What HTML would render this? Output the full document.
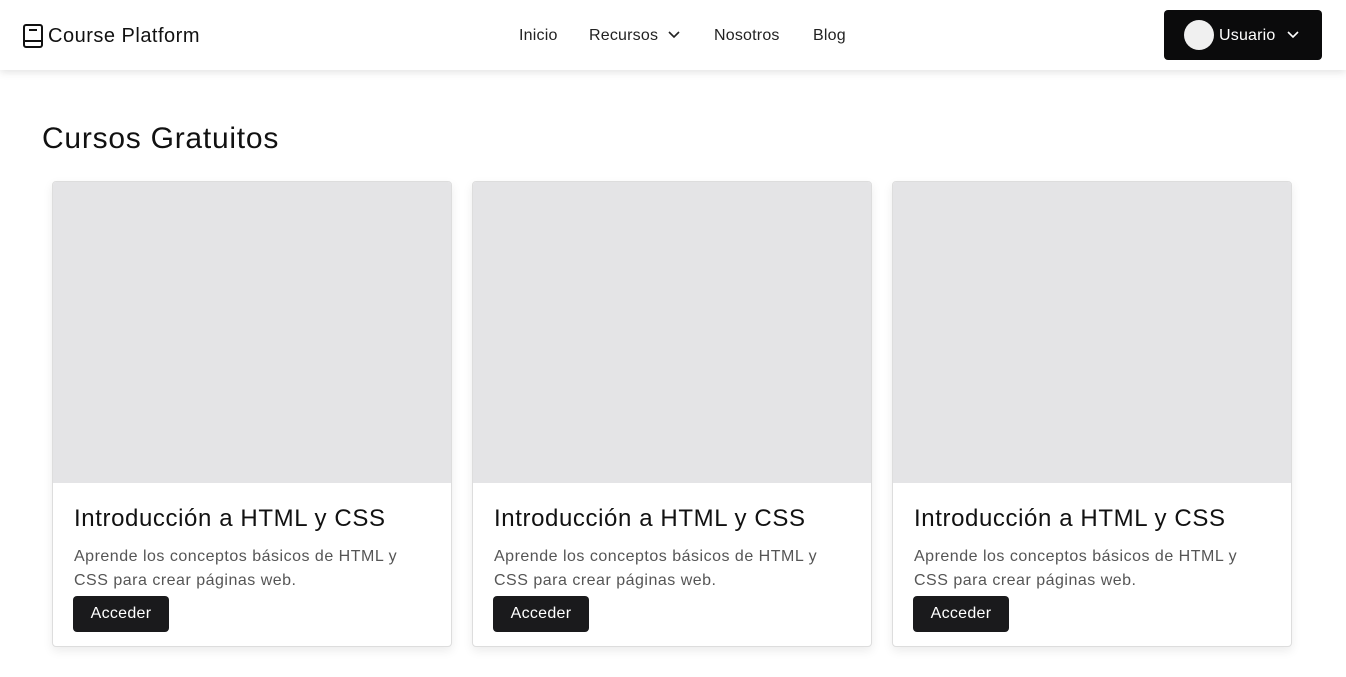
<!DOCTYPE html>
<html><head><meta charset="utf-8"><style>
*{box-sizing:border-box;margin:0;padding:0}
body{width:1346px;height:677px;background:#fff;font-family:"Liberation Sans",sans-serif;color:#111;position:relative;overflow:hidden}
header{position:absolute;left:0;top:0;width:1346px;height:70px;background:#fff;box-shadow:0 2px 8px rgba(0,0,0,.12);z-index:2}
.logo{position:absolute;left:23px;top:24px;display:flex;align-items:center;font-size:20px;color:#111;letter-spacing:.5px}
.logo svg{margin-right:5px}
nav{position:absolute;top:27px;left:519px;font-size:16px;color:#222;letter-spacing:.2px}
nav span{position:absolute;white-space:nowrap}
.user{position:absolute;left:1164px;top:10px;width:158px;height:50px;background:#0b0b0c;border-radius:4px;color:#fff;font-size:16px}
.user .av{position:absolute;left:20px;top:10px;width:30px;height:30px;border-radius:50%;background:#f0f0f0}
.user .t{position:absolute;left:55px;top:17px;letter-spacing:.2px}
.user svg{position:absolute;left:122px;top:20px}
h1{position:absolute;left:42px;top:122px;font-size:30px;font-weight:400;color:#111;letter-spacing:.75px}
.card{position:absolute;top:181px;width:400px;height:466px;border:1px solid #ddd;border-radius:4px;background:#fff;box-shadow:0 4px 10px rgba(0,0,0,.08);overflow:hidden}
.img{height:301px;background:#e4e4e6}
.card h2{position:absolute;left:21px;top:323px;font-size:24px;font-weight:400;color:#111;letter-spacing:.6px}
.card p{position:absolute;left:21px;top:363px;width:360px;font-size:16px;line-height:24px;color:#555;letter-spacing:.5px}
.btn{position:absolute;left:20px;top:414px;width:96px;height:36px;background:#1a1a1c;border-radius:4px;color:#fff;font-size:16px;text-align:center;line-height:36px;letter-spacing:.3px}
</style></head><body>
<header>
<div class="logo"><svg width="20" height="24" viewBox="0 0 20 24" fill="none" stroke="#111" stroke-width="2"><rect x="1" y="1" width="18" height="22" rx="2"/><line x1="1" y1="17" x2="19" y2="17"/><line x1="6" y1="6" x2="14" y2="6"/></svg>Course Platform</div>
<nav><span style="left:0">Inicio</span><span style="left:70px">Recursos <svg width="14" height="10" viewBox="0 0 14 10" style="margin-left:4px"><path d="M2 2l5 5 5-5" fill="none" stroke="#222" stroke-width="1.6"/></svg></span><span style="left:195px">Nosotros</span><span style="left:294px">Blog</span></nav>
<div class="user"><div class="av"></div><span class="t">Usuario</span><svg width="14" height="10" viewBox="0 0 14 10"><path d="M2 2l5 5 5-5" fill="none" stroke="#fff" stroke-width="1.6"/></svg></div>
</header>
<h1>Cursos Gratuitos</h1>
<div class="card" style="left:52px"><div class="img"></div><h2>Introducción a HTML y CSS</h2><p>Aprende los conceptos básicos de HTML y CSS para crear páginas web.</p><div class="btn">Acceder</div></div>
<div class="card" style="left:472px"><div class="img"></div><h2>Introducción a HTML y CSS</h2><p>Aprende los conceptos básicos de HTML y CSS para crear páginas web.</p><div class="btn">Acceder</div></div>
<div class="card" style="left:892px"><div class="img"></div><h2>Introducción a HTML y CSS</h2><p>Aprende los conceptos básicos de HTML y CSS para crear páginas web.</p><div class="btn">Acceder</div></div>
</body></html>
